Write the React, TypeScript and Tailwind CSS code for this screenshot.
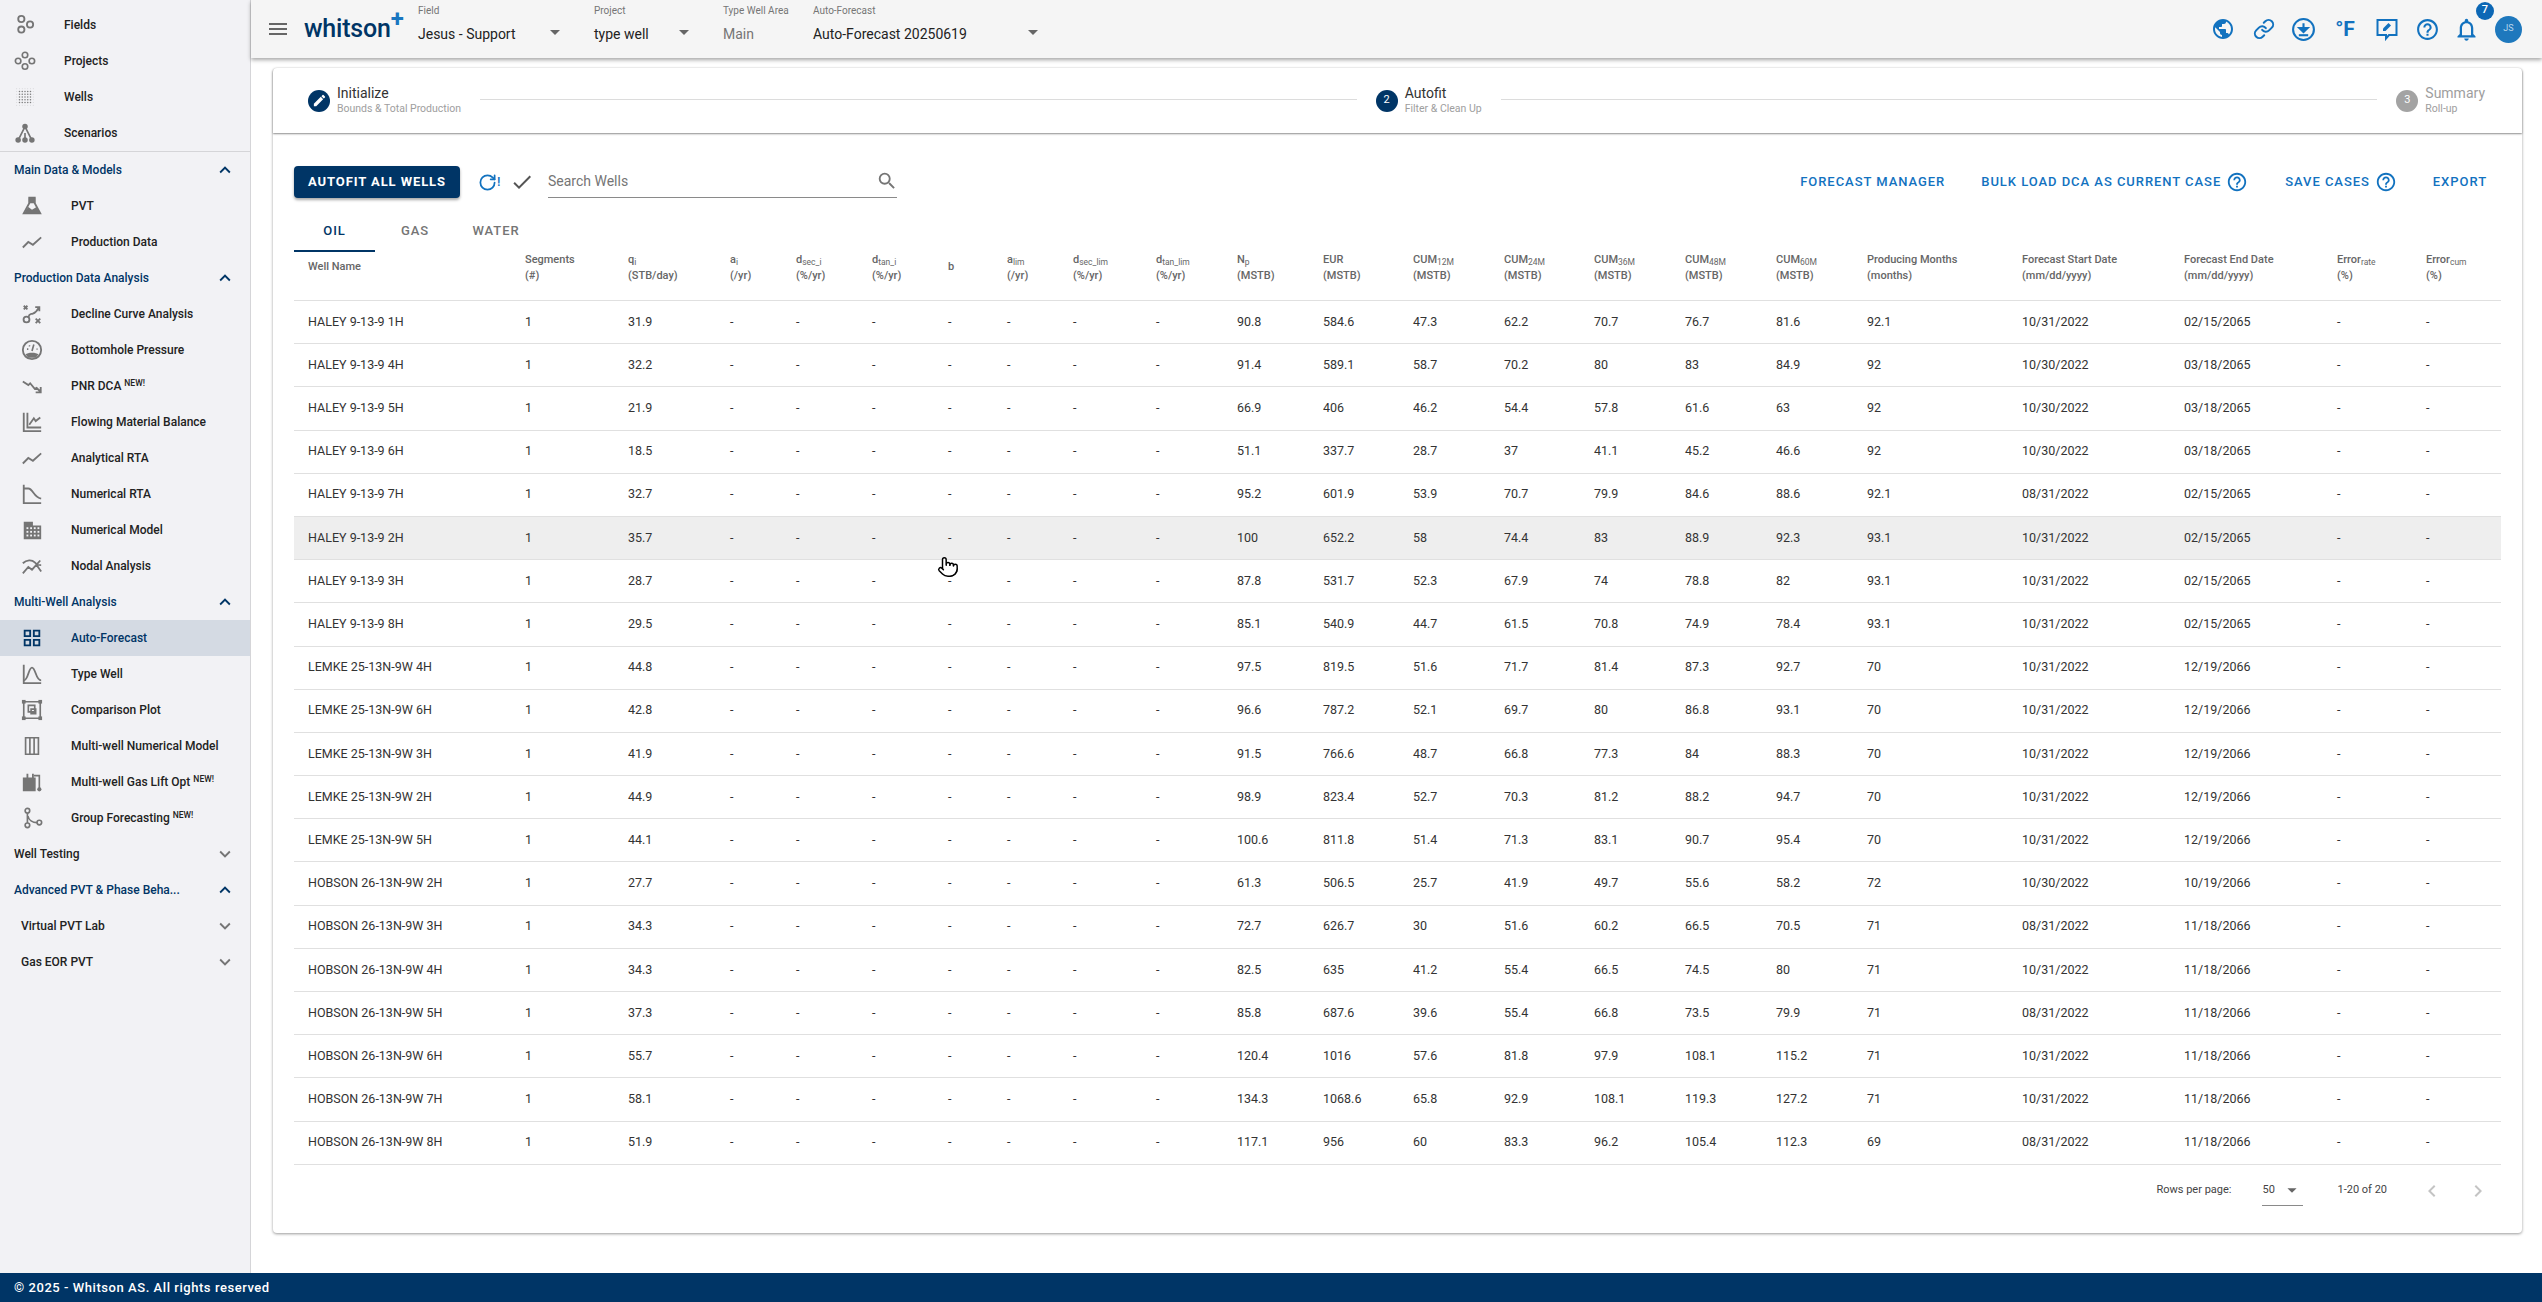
import { ReactNode } from "react";
import { Link as LinkIcon, Pointer, RotateCw } from "lucide-react";
import {
  MdArrowDropDown,
  MdCheck,
  MdChevronLeft,
  MdChevronRight,
  MdEdit,
  MdExpandLess,
  MdExpandMore,
  MdHelpOutline,
  MdMenu,
  MdNotificationsNone,
  MdOutlineGridView,
  MdPublic,
  MdSearch,
} from "react-icons/md";

const Ic = ({ children }: { children: ReactNode }) => (
  <svg viewBox="0 0 24 24" className="w-[22px] h-[22px] text-[#757575]" fill="none" stroke="currentColor" strokeWidth="1.8">
    {children}
  </svg>
);

const FieldsIcon = () => (
  <Ic>
    <circle cx="8" cy="5.5" r="3.4" strokeWidth="2" />
    <circle cx="8" cy="17" r="3.4" strokeWidth="2" />
    <circle cx="17.5" cy="11.5" r="3.4" strokeWidth="2" />
  </Ic>
);
const ProjectsIcon = () => (
  <Ic>
    <circle cx="12" cy="5.5" r="3" />
    <circle cx="12" cy="18" r="3" />
    <circle cx="4.5" cy="12" r="3" />
    <circle cx="19.5" cy="12" r="3" />
  </Ic>
);
const WellsIcon = () => (
  <Ic>
    <g stroke="none" fill="currentColor">
      {[3, 6, 9, 12, 15, 18, 21].map((x) =>
        [3, 6, 9, 12, 15, 18, 21].map((y) => (
          <circle key={`${x}-${y}`} cx={x} cy={y} r={x > 5 && x < 19 && y > 5 && y < 19 ? 0.85 : 0.5} opacity={x > 5 && x < 19 && y > 5 && y < 19 ? 0.95 : 0.35} />
        ))
      )}
    </g>
  </Ic>
);
const ScenariosIcon = () => (
  <Ic>
    <path d="M12 5 5 19M12 5l7 14M12 12v7" />
    <g fill="currentColor" stroke="none">
      <circle cx="12" cy="5" r="3" />
      <circle cx="4.5" cy="19.5" r="3" />
      <circle cx="12" cy="19.5" r="3" />
      <circle cx="19.5" cy="19.5" r="3" />
    </g>
  </Ic>
);
const PvtIcon = () => (
  <Ic>
    <path d="M9 3h6v6l6 11H3L9 9Z" strokeWidth="2" />
    <path d="M8.500 3h7v6h-7ZM5 17l3-4 4 3 5-3 3 5v2H4Z" fill="currentColor" stroke="none" />
  </Ic>
);
const LineIcon = () => (
  <Ic>
    <path d="m2 18 6-6 5 3 9-8" strokeWidth="2" />
  </Ic>
);
const DcaIcon = () => (
  <Ic>
    <path d="m3 3 4 4M7 3 3 7M16 17l5 5M21 17l-5 5" strokeWidth="2" />
    <circle cx="6" cy="18" r="3.2" strokeWidth="2" />
    <path d="M8 15.500c1-4 2-3 5-4s4-2 6-6M15.500 4.500H20V9" strokeWidth="2" />
  </Ic>
);
const GaugeIcon = () => (
  <Ic>
    <circle cx="12" cy="12" r="10" strokeWidth="2" />
    <path d="M5 17c2-2.500 12-2.500 14 0l-3 3.500H8Z" fill="currentColor" stroke="none" />
    <path d="M12 13 14 6M6.500 11h1.500M17 11h1M9 7l.5 1" strokeWidth="1.800" />
  </Ic>
);
const PnrIcon = () => (
  <Ic>
    <path d="m2 7 6 4 2-2 5 6 2-1 4 4M21.500 13v6h-5.500" strokeWidth="2" />
  </Ic>
);
const FmbIcon = () => (
  <Ic>
    <path d="M3 2v20h19M7 2v16h15" strokeWidth="2" />
    <path d="m9 15 5-7 2 3 5-4" strokeWidth="2" />
  </Ic>
);
const NumRtaIcon = () => (
  <Ic>
    <path d="M3 2v20h19" strokeWidth="2" />
    <path d="M3 6h5c5 0 6 10 14 11" strokeWidth="2" />
  </Ic>
);
const ModelIcon = () => (
  <Ic>
    <path d="M3 3h10v4h9v15H3Z" fill="currentColor" stroke="none" />
    <g fill="#f2f2f5" stroke="none">
      {[6, 10, 14, 18].map((x) => [9, 13, 17].map((y) => <rect key={`${x}-${y}`} x={x} y={y} width="2" height="2" />))}
    </g>
  </Ic>
);
const NodalIcon = () => (
  <Ic>
    <path d="M2 9c4-4 10-4 13-1s4 3 7 3M2 20l6-7 4 3 9-10M17 11l5 7" strokeWidth="2" />
  </Ic>
);
const TypeWellIcon = () => (
  <Ic>
    <path d="M3 2v20h19" strokeWidth="2" />
    <path d="M3 19c5 0 5-14 9-14s4 14 10 14" strokeWidth="2" />
  </Ic>
);
const CompareIcon = () => (
  <Ic>
    <path d="M3 3h18v18H3Z" strokeWidth="1.800" />
    <path d="M8 7h7v7H8ZM11 11h5v5h-5Z" strokeWidth="1.800" />
    <g fill="currentColor" stroke="none">
      <rect x="1" y="1" width="4" height="4" />
      <rect x="19" y="1" width="4" height="4" />
      <rect x="1" y="19" width="4" height="4" />
      <rect x="19" y="19" width="4" height="4" />
    </g>
  </Ic>
);
const ColumnsIcon = () => (
  <Ic>
    <path d="M5 3h14v18H5ZM9.700 3v18M14.300 3v18" strokeWidth="1.800" />
  </Ic>
);
const GasLiftIcon = () => (
  <Ic>
    <path d="M2 7h4V3h2v4h4V3h2v4h2v15H2Z" fill="currentColor" stroke="none" />
    <path d="M14 5h6v14" strokeWidth="1.800" />
    <circle cx="20" cy="20" r="2.300" fill="currentColor" stroke="none" />
  </Ic>
);
const GroupIcon = () => (
  <Ic>
    <circle cx="7" cy="4" r="2.500" />
    <circle cx="7" cy="20" r="2.500" />
    <circle cx="20" cy="17" r="2.500" />
    <path d="M7 6.500v11M7.500 10c1 4 5 7 10 7" />
  </Ic>
);

const New = () => <sup className="text-[8.5px] ml-[3px] font-medium">NEW!</sup>;

const NavItem = ({ icon, label, sub, active, isNew }: { icon: ReactNode; label: string; sub?: boolean; active?: boolean; isNew?: boolean }) => (
  <div className={`h-[36px] flex items-center gap-[28px] ${sub ? "pl-[21px]" : "pl-[14px]"} ${active ? "bg-[#d4dae3] text-[#003566]" : "text-[#222222]"}`}>
    <span className="w-[22px] h-[22px] flex items-center justify-center shrink-0">{icon}</span>
    <span className="text-[12px] font-medium whitespace-nowrap">
      {label}
      {isNew && <New />}
    </span>
  </div>
);

const NavSection = ({ label, open, inset, dark }: { label: string; open?: boolean; inset?: boolean; dark?: boolean }) => (
  <div className={`h-[36px] flex items-center justify-between pr-[14px] ${inset ? "pl-[21px]" : "pl-[14px]"}`}>
    <span className={`text-[12px] font-medium whitespace-nowrap ${dark ? "text-[#222222]" : "text-[#003566]"}`}>{label}</span>
    {open ? <MdExpandLess className="text-[#003566] text-[22px]" /> : <MdExpandMore className="text-[#757575] text-[22px]" />}
  </div>
);

const Sidebar = () => (
  <aside className="w-[251px] shrink-0 bg-[#f2f2f5] border-r border-[#d5d5d8] pt-[7px]">
    <NavItem icon={<FieldsIcon />} label="Fields" />
    <NavItem icon={<ProjectsIcon />} label="Projects" />
    <NavItem icon={<WellsIcon />} label="Wells" />
    <NavItem icon={<ScenariosIcon />} label="Scenarios" />
    <div className="border-t border-[#d5d5d8]" />
    <NavSection label="Main Data & Models" open />
    <NavItem sub icon={<PvtIcon />} label="PVT" />
    <NavItem sub icon={<LineIcon />} label="Production Data" />
    <NavSection label="Production Data Analysis" open />
    <NavItem sub icon={<DcaIcon />} label="Decline Curve Analysis" />
    <NavItem sub icon={<GaugeIcon />} label="Bottomhole Pressure" />
    <NavItem sub icon={<PnrIcon />} label="PNR DCA" isNew />
    <NavItem sub icon={<FmbIcon />} label="Flowing Material Balance" />
    <NavItem sub icon={<LineIcon />} label="Analytical RTA" />
    <NavItem sub icon={<NumRtaIcon />} label="Numerical RTA" />
    <NavItem sub icon={<ModelIcon />} label="Numerical Model" />
    <NavItem sub icon={<NodalIcon />} label="Nodal Analysis" />
    <NavSection label="Multi-Well Analysis" open />
    <NavItem sub active icon={<MdOutlineGridView className="text-[#003566] text-[24px]" />} label="Auto-Forecast" />
    <NavItem sub icon={<TypeWellIcon />} label="Type Well" />
    <NavItem sub icon={<CompareIcon />} label="Comparison Plot" />
    <NavItem sub icon={<ColumnsIcon />} label="Multi-well Numerical Model" />
    <NavItem sub icon={<GasLiftIcon />} label="Multi-well Gas Lift Opt" isNew />
    <NavItem sub icon={<GroupIcon />} label="Group Forecasting" isNew />
    <NavSection label="Well Testing" dark />
    <NavSection label="Advanced PVT & Phase Beha..." open />
    <NavSection label="Virtual PVT Lab" inset dark />
    <NavSection label="Gas EOR PVT" inset dark />
  </aside>
);

const Picker = ({ label, value, box, arrow, muted }: { label: string; value: string; box: string; arrow?: boolean; muted?: boolean }) => (
  <div className={`${box} shrink-0 pt-[4px]`}>
    <div className="text-[10px] leading-[14px] text-[#757575]">{label}</div>
    <div className={`mt-[5px] flex items-center justify-between text-[14px] leading-[22px] ${muted ? "text-[#757575]" : "text-[#222222]"}`}>
      <span className="whitespace-nowrap">{value}</span>
      {arrow && <MdArrowDropDown className="text-[#666666] text-[24px] -mt-[4px]" />}
    </div>
  </div>
);

const DownloadIcon = () => (
  <svg viewBox="0 0 24 24" className="w-[25px] h-[25px]" fill="none" stroke="currentColor" strokeWidth="2">
    <circle cx="12" cy="12" r="10" />
    <path d="M12 6v6.500" />
    <path d="m8 10.500 4 4 4-4Z" fill="currentColor" />
    <path d="M7.500 17.500h9" />
  </svg>
);

const FeedbackIcon = () => (
  <svg viewBox="0 0 24 24" className="w-[24px] h-[24px] ml-[18px]" fill="none" stroke="currentColor" strokeWidth="2">
    <path d="M2.500 3h19v15h-7.500l-3 3.500V18H2.500Z" />
    <path d="M8 14v-2.500l5.500-5.500 2.500 2.500-5.500 5.500Z" fill="currentColor" stroke="none" />
  </svg>
);

const Header = () => (
  <header className="h-[58px] shrink-0 bg-[#f5f5f5] shadow-[0_2px_4px_rgba(0,0,0,0.35)] flex items-start pl-[15px] relative z-10">
    <MdMenu className="text-[#666666] text-[24px] mt-[17px] shrink-0" />
    <div className="w-[128px] shrink-0 pl-[14px] flex items-start">
      <span className="text-[25px] leading-[30px] mt-[14px] font-medium text-[#003566] tracking-[-0.2px]">whitson</span>
      <span className="text-[24px] leading-[24px] mt-[7px] font-bold text-[#1976c0]">+</span>
    </div>
    <Picker label="Field" value="Jesus - Support" box="w-[176px] pr-[27px]" arrow />
    <Picker label="Project" value="type well" box="w-[129px] pr-[27px]" arrow />
    <Picker label="Type Well Area" value="Main" box="w-[90px]" muted />
    <Picker label="Auto-Forecast" value="Auto-Forecast 20250619" box="w-[240px] pr-[8px]" arrow />
    <div className="ml-auto flex items-center h-[58px] text-[#1272bf] pr-[20px]">
      <MdPublic className="text-[24px]" />
      <LinkIcon className="w-[22px] h-[22px] ml-[18px]" strokeWidth={2.2} />
      <span className="ml-[16px]">
        <DownloadIcon />
      </span>
      <span className="ml-[17px] w-[24px] text-center text-[21px] font-bold leading-none">°F</span>
      <FeedbackIcon />
      <MdHelpOutline className="text-[25px] ml-[16px]" />
      <MdNotificationsNone className="text-[27px] ml-[13px]" />
      <div className="relative ml-[15px]">
        <div className="w-[27px] h-[27px] rounded-full bg-[#1e78bd] text-[#b9d5ea] text-[9px] flex items-center justify-center">JS</div>
        <div className="absolute -top-[14px] -left-[19px] w-[18px] h-[18px] rounded-full bg-[#0c67b5] text-white text-[11px] font-medium flex items-center justify-center">7</div>
      </div>
    </div>
  </header>
);

const Step = ({ circle, title, sub, muted }: { circle: ReactNode; title: string; sub: string; muted?: boolean }) => (
  <div className="flex items-center shrink-0">
    <div className={`w-[22px] h-[22px] rounded-full text-white text-[11px] flex items-center justify-center ${muted ? "bg-[#a3a3a3]" : "bg-[#003566]"}`}>{circle}</div>
    <div className="ml-[7px]">
      <div className={`text-[14px] leading-[17px] ${muted ? "text-[#9e9e9e]" : "text-[#333333]"}`}>{title}</div>
      <div className="text-[10.5px] leading-[14px] text-[#9e9e9e]">{sub}</div>
    </div>
  </div>
);

const Stepper = () => (
  <div className="h-[65px] flex items-center pl-[35px] pr-[37px] rounded-t-[4px] shadow-[0_1px_2px_rgba(0,0,0,0.45)]">
    <Step circle={<MdEdit className="text-[15px]" />} title="Initialize" sub="Bounds & Total Production" />
    <div className="flex-1 border-t border-[#dcdcdc] mx-[19px] -mt-[2px]" />
    <Step circle="2" title="Autofit" sub="Filter & Clean Up" />
    <div className="flex-1 border-t border-[#dcdcdc] mx-[19px] -mt-[2px]" />
    <Step circle="3" title="Summary" sub="Roll-up" muted />
  </div>
);

const ActionLink = ({ label, help }: { label: string; help?: boolean }) => (
  <span className="flex items-center text-[#1272bf] text-[13px] font-medium tracking-[0.95px] whitespace-nowrap">
    {label}
    {help && <MdHelpOutline className="text-[22px] ml-[5px]" />}
  </span>
);

const Toolbar = () => (
  <div className="flex items-center h-[32px] mt-[33px] ml-[21px] mr-[35px]">
    <button className="w-[166px] h-[32px] shrink-0 bg-[#003566] text-white text-[13px] font-bold tracking-[0.9px] rounded-[4px] shadow-[0_2px_3px_rgba(0,0,0,0.35)]">AUTOFIT ALL WELLS</button>
    <span className="ml-[18px] flex items-center text-[#1272bf] w-[26px]">
      <RotateCw className="w-[19px] h-[19px]" strokeWidth={2.2} />
      <span className="text-[13px] font-medium">!</span>
    </span>
    <MdCheck className="text-[#555555] text-[24px] ml-[6px]" />
    <div className="ml-[14px] w-[349px] h-[32px] border-b border-[#8a8a8a] flex items-center justify-between">
      <span className="text-[#757575] text-[14px]">Search Wells</span>
      <MdSearch className="text-[#757575] text-[22px] -mr-[1px] -mt-[2px]" />
    </div>
    <div className="ml-auto flex items-center">
      <ActionLink label="FORECAST MANAGER" />
      <span className="ml-[36px]">
        <ActionLink label="BULK LOAD DCA AS CURRENT CASE" help />
      </span>
      <span className="ml-[37px]">
        <ActionLink label="SAVE CASES" help />
      </span>
      <span className="ml-[36px]">
        <ActionLink label="EXPORT" />
      </span>
    </div>
  </div>
);

const Tabs = () => (
  <div className="flex h-[48px] mt-[6px] ml-[21px] text-[13px] font-medium tracking-[0.9px]">
    <div className="w-[81px] pt-[17px] text-center text-[#003566] border-b-2 border-[#003566]">OIL</div>
    <div className="w-[80px] pt-[17px] text-center text-[#757575]">GAS</div>
    <div className="w-[82px] pt-[17px] text-center text-[#757575]">WATER</div>
  </div>
);

const cols =
  "grid grid-cols-[217px_103px_102px_66px_76px_76px_59px_66px_83px_81px_86px_90px_91px_90px_91px_91px_91px_155px_162px_153px_89px_76px]";

const Th = ({ a, s, b }: { a: string; s?: string; b?: string }) => (
  <div className={`whitespace-nowrap ${b ? "" : "mt-[7px]"}`}>
    <div className="leading-[16px]">
      {a}
      {s && <sub className="text-[8.5px] font-normal">{s}</sub>}
    </div>
    {b && <div className="leading-[16px]">{b}</div>}
  </div>
);

const heads: { a: string; s?: string; b?: string }[] = [
  { a: "Segments", b: "(#)" },
  { a: "q", s: "i", b: "(STB/day)" },
  { a: "a", s: "i", b: "(/yr)" },
  { a: "d", s: "sec_i", b: "(%/yr)" },
  { a: "d", s: "tan_i", b: "(%/yr)" },
  { a: "b" },
  { a: "a", s: "lim", b: "(/yr)" },
  { a: "d", s: "sec_lim", b: "(%/yr)" },
  { a: "d", s: "tan_lim", b: "(%/yr)" },
  { a: "N", s: "p", b: "(MSTB)" },
  { a: "EUR", b: "(MSTB)" },
  { a: "CUM", s: "12M", b: "(MSTB)" },
  { a: "CUM", s: "24M", b: "(MSTB)" },
  { a: "CUM", s: "36M", b: "(MSTB)" },
  { a: "CUM", s: "48M", b: "(MSTB)" },
  { a: "CUM", s: "60M", b: "(MSTB)" },
  { a: "Producing Months", b: "(months)" },
  { a: "Forecast Start Date", b: "(mm/dd/yyyy)" },
  { a: "Forecast End Date", b: "(mm/dd/yyyy)" },
  { a: "Error", s: "rate", b: "(%)" },
  { a: "Error", s: "cum", b: "(%)" },
];

const rows: string[][] = [
  ["HALEY 9-13-9 1H", "31.9", "90.8", "584.6", "47.3", "62.2", "70.7", "76.7", "81.6", "92.1", "10/31/2022", "02/15/2065"],
  ["HALEY 9-13-9 4H", "32.2", "91.4", "589.1", "58.7", "70.2", "80", "83", "84.9", "92", "10/30/2022", "03/18/2065"],
  ["HALEY 9-13-9 5H", "21.9", "66.9", "406", "46.2", "54.4", "57.8", "61.6", "63", "92", "10/30/2022", "03/18/2065"],
  ["HALEY 9-13-9 6H", "18.5", "51.1", "337.7", "28.7", "37", "41.1", "45.2", "46.6", "92", "10/30/2022", "03/18/2065"],
  ["HALEY 9-13-9 7H", "32.7", "95.2", "601.9", "53.9", "70.7", "79.9", "84.6", "88.6", "92.1", "08/31/2022", "02/15/2065"],
  ["HALEY 9-13-9 2H", "35.7", "100", "652.2", "58", "74.4", "83", "88.9", "92.3", "93.1", "10/31/2022", "02/15/2065"],
  ["HALEY 9-13-9 3H", "28.7", "87.8", "531.7", "52.3", "67.9", "74", "78.8", "82", "93.1", "10/31/2022", "02/15/2065"],
  ["HALEY 9-13-9 8H", "29.5", "85.1", "540.9", "44.7", "61.5", "70.8", "74.9", "78.4", "93.1", "10/31/2022", "02/15/2065"],
  ["LEMKE 25-13N-9W 4H", "44.8", "97.5", "819.5", "51.6", "71.7", "81.4", "87.3", "92.7", "70", "10/31/2022", "12/19/2066"],
  ["LEMKE 25-13N-9W 6H", "42.8", "96.6", "787.2", "52.1", "69.7", "80", "86.8", "93.1", "70", "10/31/2022", "12/19/2066"],
  ["LEMKE 25-13N-9W 3H", "41.9", "91.5", "766.6", "48.7", "66.8", "77.3", "84", "88.3", "70", "10/31/2022", "12/19/2066"],
  ["LEMKE 25-13N-9W 2H", "44.9", "98.9", "823.4", "52.7", "70.3", "81.2", "88.2", "94.7", "70", "10/31/2022", "12/19/2066"],
  ["LEMKE 25-13N-9W 5H", "44.1", "100.6", "811.8", "51.4", "71.3", "83.1", "90.7", "95.4", "70", "10/31/2022", "12/19/2066"],
  ["HOBSON 26-13N-9W 2H", "27.7", "61.3", "506.5", "25.7", "41.9", "49.7", "55.6", "58.2", "72", "10/30/2022", "10/19/2066"],
  ["HOBSON 26-13N-9W 3H", "34.3", "72.7", "626.7", "30", "51.6", "60.2", "66.5", "70.5", "71", "08/31/2022", "11/18/2066"],
  ["HOBSON 26-13N-9W 4H", "34.3", "82.5", "635", "41.2", "55.4", "66.5", "74.5", "80", "71", "10/31/2022", "11/18/2066"],
  ["HOBSON 26-13N-9W 5H", "37.3", "85.8", "687.6", "39.6", "55.4", "66.8", "73.5", "79.9", "71", "08/31/2022", "11/18/2066"],
  ["HOBSON 26-13N-9W 6H", "55.7", "120.4", "1016", "57.6", "81.8", "97.9", "108.1", "115.2", "71", "10/31/2022", "11/18/2066"],
  ["HOBSON 26-13N-9W 7H", "58.1", "134.3", "1068.6", "65.8", "92.9", "108.1", "119.3", "127.2", "71", "10/31/2022", "11/18/2066"],
  ["HOBSON 26-13N-9W 8H", "51.9", "117.1", "956", "60", "83.3", "96.2", "105.4", "112.3", "69", "08/31/2022", "11/18/2066"],
];

const WellTable = () => (
  <div className="ml-[21px] mr-[21px]">
    <div className={`${cols} h-[49px] border-b border-[#e0e0e0] text-[11px] font-medium text-[#666666] pl-[14px] items-start`}>
      <div className="whitespace-nowrap mt-[7px]">Well Name</div>
      {heads.map((h, i) => (
        <Th key={i} {...h} />
      ))}
    </div>
    {rows.map((r) => {
      const [name, q, ...rest] = r;
      return (
        <div key={name} className={`${cols} h-[43.2px] items-center border-b border-[#e0e0e0] pl-[14px] text-[12.5px] text-[#333333] ${name === "HALEY 9-13-9 2H" ? "bg-[#eeeeee]" : ""}`}>
          <div className="whitespace-nowrap">{name}</div>
          <div>1</div>
          <div>{q}</div>
          {[0, 1, 2, 3, 4, 5, 6].map((k) => (
            <div key={k}>-</div>
          ))}
          {rest.map((v, k) => (
            <div key={k}>{v}</div>
          ))}
          <div>-</div>
          <div>-</div>
        </div>
      );
    })}
  </div>
);

const Pagination = () => (
  <div className="h-[52px] flex items-start justify-end pr-[32px] text-[#444444] text-[11px]">
    <span className="mt-[17px]">Rows per page:</span>
    <div className="ml-[31px] mt-[10px] w-[41px] h-[31px] border-b border-[#8a8a8a] flex items-start justify-between pt-[7px]">
      <span>50</span>
      <MdArrowDropDown className="text-[#666666] text-[22px] -mt-[3px]" />
    </div>
    <span className="ml-[34px] mt-[17px]">1-20 of 20</span>
    <MdChevronLeft className="text-[#c4c4c4] text-[24px] ml-[33px] mt-[14px]" />
    <MdChevronRight className="text-[#c4c4c4] text-[24px] ml-[22px] mt-[14px]" />
  </div>
);

export default function App() {
  return (
    <div className="relative w-[2542px] h-[1302px] overflow-hidden bg-white flex flex-col [font-family:Roboto,sans-serif]">
      <div className="flex flex-1 min-h-0">
        <Sidebar />
        <main className="flex-1 min-w-0 flex flex-col">
          <Header />
          <div className="mt-[10px] ml-[22px] mr-[20px] h-[1165px] bg-white rounded-[4px] shadow-[0_1px_3px_rgba(0,0,0,0.4)]">
            <Stepper />
            <Toolbar />
            <Tabs />
            <WellTable />
            <Pagination />
          </div>
        </main>
      </div>
      <footer className="h-[29px] shrink-0 bg-[#003566] text-white text-[13px] font-medium tracking-[0.55px] flex items-center pl-[14px]">© 2025 - Whitson AS. All rights reserved</footer>
      <div className="absolute left-[937px] top-[556px]">
        <Pointer className="w-[22px] h-[22px] text-black fill-white" strokeWidth={1.6} />
      </div>
    </div>
  );
}
